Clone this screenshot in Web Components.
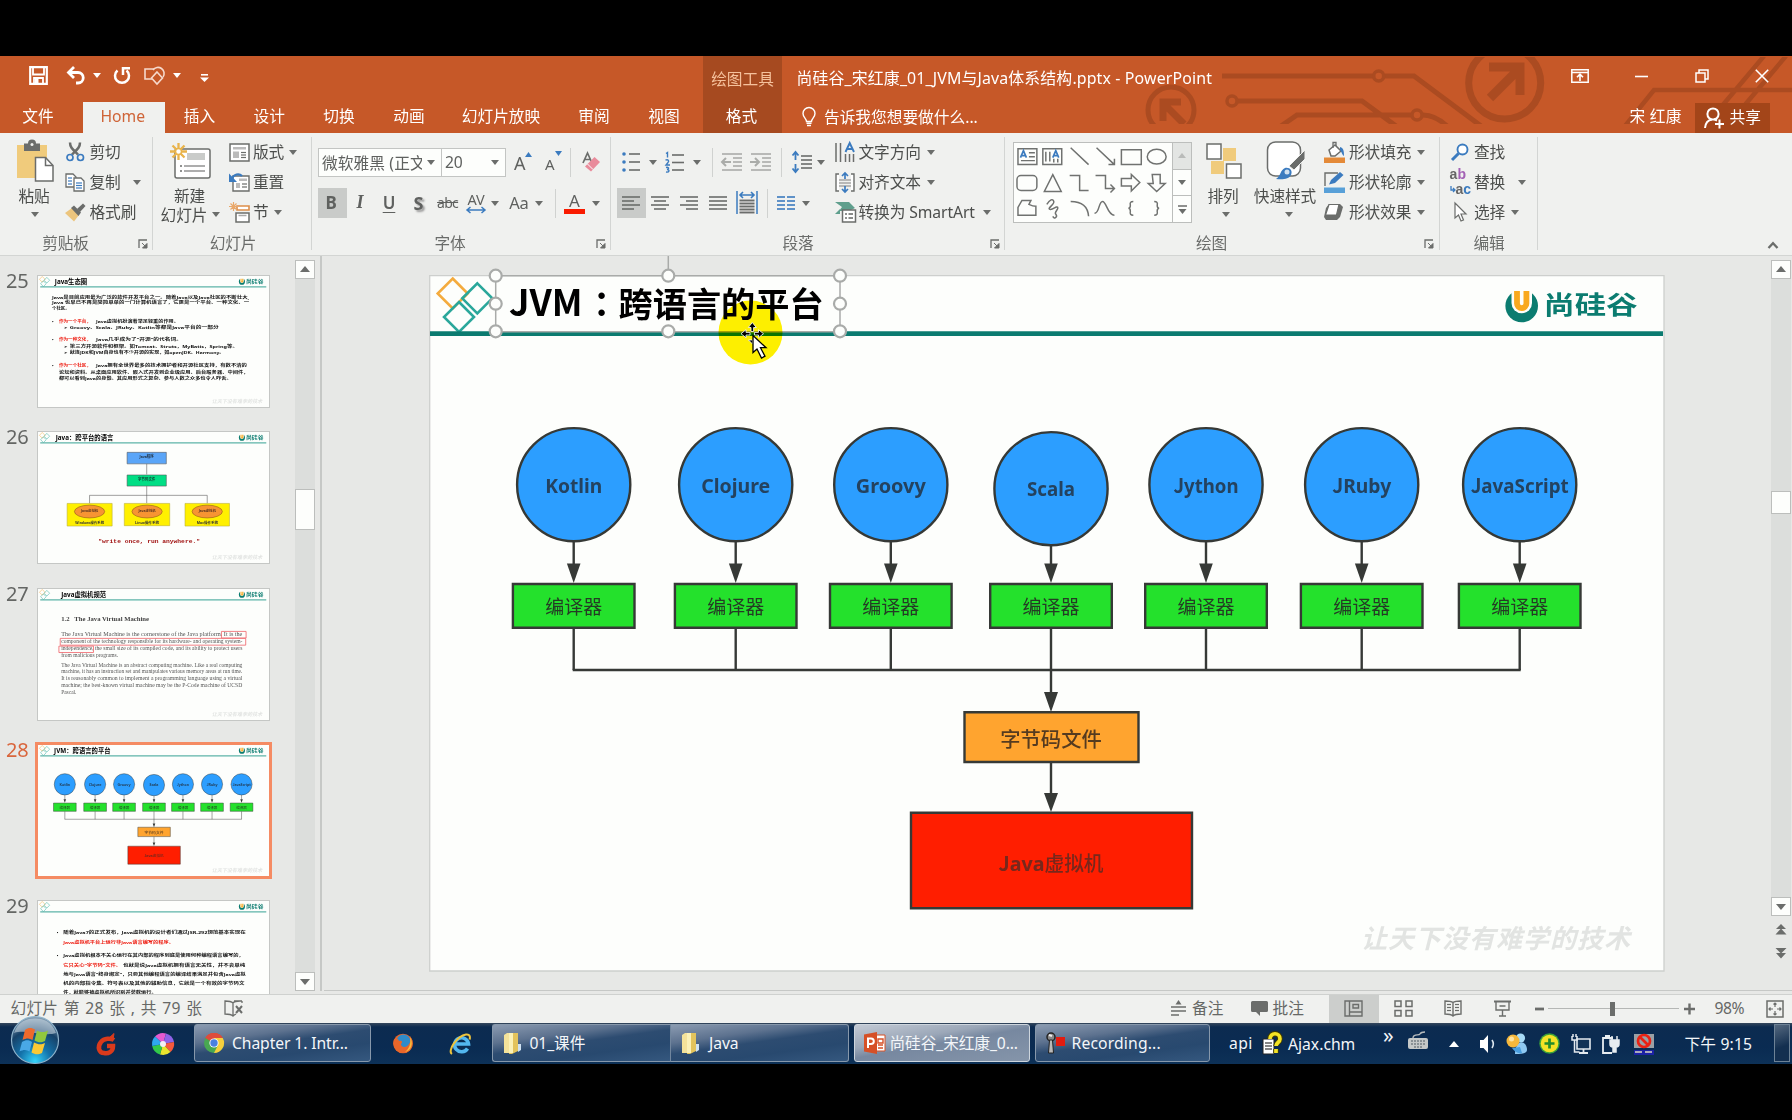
<!DOCTYPE html>
<html lang="zh-CN">
<head>
<meta charset="utf-8">
<title>PowerPoint</title>
<style>
html,body{margin:0;padding:0;background:#000;overflow:hidden}
body{width:1792px;height:1120px;font-family:"Noto Sans","Noto Sans CJK SC",sans-serif}
</style>
</head>
<body>
<ppt-app></ppt-app>
<script>
const FONT = '"Noto Sans","Noto Sans CJK SC",sans-serif';
const define = (name, render) => customElements.define(name, class extends HTMLElement {
  constructor(){ super(); this.attachShadow({mode:'open'}); }
  connectedCallback(){ this.shadowRoot.innerHTML = render(this); }
});

/* ---------- icon set: [width, height, markup] ---------- */
const G = '#6b6d6b', B = '#3b7bbf';
const lines = (x, ys, w, c=G, s=1.6) => ys.map(y=>`<path d="M${x} ${y}h${w}" stroke="${c}" stroke-width="${s}"/>`).join('');
const ICONS = {
  caret:[8,5,`<path d="M0 0h8L4 5z" fill="${G}"/>`],
  caretw:[8,5,`<path d="M0 0h8L4 5z" fill="#fff"/>`],
  launch:[10,10,`<path d="M1 9V1h8" fill="none" stroke="${G}" stroke-width="1.3"/><path d="M4 4l4 4M9 4.5V9H4.500z" fill="${G}" stroke="${G}"/>`],
  save:[19,19,`<path d="M1.200 1.200h16.600v16.600H1.200z" fill="none" stroke="#fff" stroke-width="2.200"/><path d="M4 2v6.500h11V2M5 18v-6h9v6" fill="none" stroke="#fff" stroke-width="1.800"/><path d="M6 13h3.500v5H6z" fill="#fff"/>`],
  undo:[20,19,`<path d="M2.500 6.500H12a5 5 0 0 1 0 10.500h-2" fill="none" stroke="#fff" stroke-width="2.800"/><path d="M8 1L2.500 6.500 8 12" fill="none" stroke="#fff" stroke-width="2.800"/>`],
  redo:[18,19,`<path d="M4.500 4.500A7 7 0 1 0 13.500 4.500" fill="none" stroke="#fff" stroke-width="2.500"/><path d="M10 9V2.200h7" fill="none" stroke="#fff" stroke-width="2.500"/>`],
  shapesq:[22,20,`<path d="M8 14H1V4h9" fill="none" stroke="#f6d9cc" stroke-width="1.600"/><path d="M9 5a6 6 0 1 1 10 7" fill="none" stroke="#f6d9cc" stroke-width="1.600"/><path d="M13 7l5.500 6-5.500 6-5.500-6z" fill="#c65828" stroke="#f6d9cc" stroke-width="1.600"/>`],
  more:[9,8,`<path d="M1 .8h7" stroke="#fff" stroke-width="1.600"/><path d="M0 3.500h9L4.500 8z" fill="#fff"/>`],
  dispopt:[18,14,`<path d="M.8.8h16.400v12.400H.8zM.8 3.500h16.400" fill="none" stroke="#fff" stroke-width="1.500"/><path d="M9 12V5.500M6 8.200l3-3 3 3" fill="none" stroke="#fff" stroke-width="1.600"/>`],
  min:[13,14,`<path d="M0 7.500h13" stroke="#fff" stroke-width="1.600"/>`],
  restore:[14,14,`<path d="M1 4h9v9H1zM4 4V1h9v9h-3" fill="none" stroke="#fff" stroke-width="1.500"/>`],
  close:[14,14,`<path d="M.8.8l12.400 12.400M13.200.8L.8 13.200" stroke="#fff" stroke-width="1.600"/>`],
  bulb:[14,20,`<path d="M4.500 14.500c0-3-3.500-4-3.500-8a6 6 0 0 1 12 0c0 4-3.500 5-3.500 8z" fill="none" stroke="#fff" stroke-width="1.400"/><path d="M4.500 16.300h5M5 18.500h4" stroke="#fff" stroke-width="1.400"/>`],
  person:[20,22,`<circle cx="9" cy="7" r="5.600" fill="none" stroke="#fff" stroke-width="2"/><path d="M1 21c.5-5 3-8 7-8.500M10 12l3 1.500M15.500 12.500v9M11 17h9" fill="none" stroke="#fff" stroke-width="2"/>`],
  paste:[38,41,`<rect x="1" y="4" width="30" height="33" fill="#f0cb7c"/><path d="M8 2.500h4a4 4 0 0 1 8 0h4V10H8z" fill="${G}"/><circle cx="16" cy="3.500" r="1.500" fill="#f0f1ef"/><path d="M19.500 16.500h10l7.500 8V40h-17.500z" fill="#fff" stroke="${G}" stroke-width="1.500"/><path d="M29.500 16.500v8H37" fill="none" stroke="${G}" stroke-width="1.500"/>`],
  cut:[19,20,`<path d="M4 .5c0 5 3 7 8 12M14 .5c0 5-3 7-8 12" stroke="${G}" stroke-width="2.500" fill="none"/><circle cx="4" cy="15.500" r="3" fill="none" stroke="${B}" stroke-width="1.700"/><circle cx="14.500" cy="15.500" r="3" fill="none" stroke="${B}" stroke-width="1.700"/>`],
  copy:[20,19,`<path d="M1 1h7l3 3v10H1z" fill="#fff" stroke="${G}" stroke-width="1.300"/><path d="M9 5h7l3 3v10H9z" fill="#fff" stroke="${G}" stroke-width="1.300"/>${lines(3,[5,8,11],4,B,1.200)}${lines(11,[10,12.500,15],6,B,1.200)}`],
  brush:[21,19,`<path d="M0 10l7-5 7 7-5 6.500z" fill="#ecc57d"/><path d="M6 5l3-2.500 7 7L13.500 13z" fill="${G}"/><path d="M12 6l6-5.500 2.500 2.500-5.500 6z" fill="${G}"/>`],
  newslide:[41,36,`<rect x="5" y="6" width="35" height="29" rx="2" fill="#fff" stroke="${G}" stroke-width="1.500"/><path d="M17 10h18v7H17z" fill="#c9cbc9"/>${lines(10,[23,28],2,G)}${lines(14,[23,28],21,'#999')}<g stroke="#e9b44c" stroke-width="2.300"><path d="M8.500 0v17M0 8.500h17M2.500 2.500l12 12M14.500 2.500l-12 12"/></g><circle cx="8.500" cy="8.500" r="3" fill="#fff" stroke="#e9b44c" stroke-width="1.500"/>`],
  layout:[21,19,`<path d="M1 1h19v17H1z" fill="#fff" stroke="${G}" stroke-width="1.500"/><path d="M4 4h13v2.500H4zM4 8.500h6V15H4z" fill="#bbb"/>${lines(12,[9.500,12,14.500],5,G,1.200)}`],
  reset:[21,20,`<path d="M4 4h16v15H4z" fill="#fff" stroke="${G}" stroke-width="1.400"/><path d="M7 11h4v5H7zM10 6.500h8V9h-8z" fill="#bbb"/>${lines(13,[12,15],5,G,1.200)}<path d="M2.500 7C5 2 10 1 13 4" stroke="${B}" fill="none" stroke-width="2.300"/><path d="M0 1.500V10h8z" fill="${B}"/>`],
  section:[21,21,`<path d="M8 4h12v4H8z" fill="#fff" stroke="#dd8e4a" stroke-width="1.600"/><path d="M7 11h13v9H7z" fill="#fff" stroke="${G}" stroke-width="1.500"/><path d="M9.500 13.500h8" stroke="#aaa" stroke-width="1.500"/><path d="M4.500 0v9M0 4.500h9M1.500 1.500l6 6M7.500 1.500l-6 6" stroke="#e9a86a" stroke-width="1.200"/>`],
  eraser:[18,20,`<path d="M1 11L5.500 1 10 11M3 7.500h5" fill="none" stroke="${G}" stroke-width="1.700"/><path d="M3 14.500L12.500 5 18 10l-9 9.500z" fill="#e98b9b"/><path d="M5.500 12l5.500 5.500" stroke="#fff" stroke-width="1"/>`],
  avarrow:[20,8,`<path d="M1 4h18M4.500 1L1 4l3.500 3M15.500 1L19 4l-3.500 3" fill="none" stroke="${B}" stroke-width="1.500"/>`],
  bullets:[18,20,`<g fill="${B}"><circle cx="2" cy="2" r="1.800"/><circle cx="2" cy="10" r="1.800"/><circle cx="2" cy="18" r="1.800"/></g>${lines(7,[2,10,18],11)}`],
  numbers:[19,21,`<g fill="none" stroke="${B}" stroke-width="1.400"><path d="M1 1.500l1.500-1v5M.5 8.200C3 7 4.500 9 3 10.500L1 13h4M1 15.500c3-1 3.500 1.500 1 2 3 .2 2.500 3-1 2.500"/></g>${lines(7,[3,10.500,18],12)}`],
  dedent:[22,18,`${lines(1,[1,17],20,'#aaaca9')}${lines(12,[5,9,13],9,'#aaaca9')}<path d="M10 9H1.500M5 5L1 9l4 4" fill="none" stroke="#aaaca9" stroke-width="2"/>`],
  indent:[22,18,`${lines(1,[1,17],20,'#aaaca9')}${lines(12,[5,9,13],9,'#aaaca9')}<path d="M0 9h8.500M5 5l4 4-4 4" fill="none" stroke="#aaaca9" stroke-width="2"/>`],
  spacing:[20,22,`<path d="M3.500 1v8M.5 4.500l3-3.500 3 3.500M3.500 21v-8M.5 17.500l3 3.500 3-3.500" fill="none" stroke="${B}" stroke-width="1.800"/>${lines(9,[5,9,13,17],11)}`],
  al:[18,15,lines(0,[1,9],18)+lines(0,[5,13],12)],
  ac:[18,15,lines(0,[1,9],18)+lines(3,[5,13],12)],
  ar:[18,15,lines(0,[1,9],18)+lines(6,[5,13],12)],
  aj:[18,15,lines(0,[1,5,9,13],18)],
  dist:[22,23,`<path d="M1 0v23M21 0v23" stroke="${B}" stroke-width="1.500"/><path d="M4 4h14M7 1L4 4l3 3M15 1l3 3-3 3" fill="none" stroke="${B}" stroke-width="1.600"/>${lines(3.500,[9.500,12.500,15.500,18.500,21.500],15,G,1.900)}`],
  cols:[18,15,lines(0,[1,5,9,13],8,B)+lines(10,[1,5,9,13],8,B)],
  tdir:[21,21,`<path d="M1 1v19M5.500 1v19M10.500 12v8M14.500 12v8M18.500 12v8" stroke="${G}" stroke-width="1.500"/><path d="M10.500 10L14.700 1 19 10M12 7h5.500" fill="none" stroke="${B}" stroke-width="1.900"/>`],
  talign:[20,21,`<path d="M4 2H1v17h3M16 2h3v17h-3" fill="#fff" stroke="${G}" stroke-width="1.400"/>${lines(4,[8,11,14],12,'#999',1.300)}<path d="M10 7V1M7 4l3-3 3 3M10 14v6M7 17l3 3 3-3" fill="none" stroke="${B}" stroke-width="1.700"/>`],
  smart:[22,22,`<path d="M0 1h14l6 6-6 3H4L7 6z" fill="#5f9f8d"/><path d="M0 13l5-5v5z" fill="#5f9f8d"/><path d="M7.500 9h13v12h-13z" fill="#fff" stroke="${G}" stroke-width="1.500"/>${lines(10,[13,17],2)}${lines(13.500,[13,17],4.500)}`],
  arrange:[36,36,`<path d="M17 5h13v13H17zM5 18h13v13H5z" fill="#f0cb7c"/><path d="M1 1h14v15H1zM20.500 21H35v14H20.500z" fill="#fff" stroke="${G}" stroke-width="1.500"/>`],
  quick:[40,40,`<rect x="1.500" y="1" width="33" height="34" rx="8" fill="#fff" stroke="${G}" stroke-width="1.500"/><path d="M39 9v9L28 29l-5-4z" fill="${G}" stroke="#f0f1ef"/><path d="M10 38c5-3 4-9 9-11 5-1 8 3 6 7-2 4-8 5-15 4z" fill="${B}"/><circle cx="21" cy="31" r="2.500" fill="#cfe0f0"/>`],
  fill:[22,22,`<path d="M5 9l6-5 6 6-6 5H7z" fill="#fff" stroke="${G}" stroke-width="1.500"/><path d="M9 7V1.500h3V5" fill="none" stroke="${G}" stroke-width="1.300"/><path d="M16 6c4 1 4 5 4 9-2-1-2-4-4-6z" fill="${B}"/><path d="M0 16.500h21V22H0z" fill="#e48a38"/>`],
  outline:[22,22,`<path d="M1 15V2h13" fill="none" stroke="${G}" stroke-width="1.400"/><path d="M5 13.500L7 9l9-8 3.500 3L11 12z" fill="${B}"/><path d="M0 16.500h21V22H0z" fill="#58a0d8"/>`],
  effect:[20,18,`<path d="M5 1h11l3 3-3 10-3 3H2l-2-3 2-9z" fill="${G}"/><path d="M5 1.500h10L12.500 12H1.500z" fill="#fff" stroke="${G}" stroke-width="1.200"/>`],
  find:[18,18,`<circle cx="11.500" cy="6.500" r="5" fill="#fff" stroke="${B}" stroke-width="1.900"/><path d="M7.500 10.500L1 17" stroke="${B}" stroke-width="3"/>`],
  cursor:[13,20,`<path d="M1 1v15l3.500-3 2.500 6 2.500-1-2.500-6H12z" fill="#fff" stroke="${G}" stroke-width="1.200"/>`],
  up:[12,8,`<path d="M1.500 7L6 2.200 10.500 7" fill="none" stroke="${G}" stroke-width="2.300"/>`],
  book:[19,17,`<path d="M9 3C7 1 4 1 1 1v13c3 0 6 0 8 2 1-1 2-1.500 3-2M9 3v13M9 3c1-1.500 3-2 7-2M10 1h8M18 1v2" fill="none" stroke="${G}" stroke-width="1.300"/><path d="M12 6l6 7M18 6l-6 7" stroke="${G}" stroke-width="2"/>`],
  notes:[15,16,`<path d="M4.500 4.500L7.500 0l3 4.500z" fill="${G}"/>${lines(0,[7,11],15,G,1.500)}${lines(0,[15],8,G,1.500)}`],
  comment:[17,15,`<path d="M1.500 0h14q1.500 0 1.500 1.500v8q0 1.500-1.500 1.500H9v4l-4-4H1.500Q0 11 0 9.500v-8Q0 0 1.500 0z" fill="${G}"/>`],
  normal:[19,17,`<path d="M1 1h17v15H1zM5.500 1v15M5.500 12H18M9 4.500h5.500V8H9z" fill="none" stroke="${G}" stroke-width="1.400"/>`],
  sorter:[19,17,`<path d="M1 1h6v5.500H1zM12 1h6v5.500h-6zM1 10.500h6V16H1zM12 10.500h6V16h-6z" fill="none" stroke="${G}" stroke-width="1.500"/>`],
  reading:[18,17,`<path d="M9 2.500C7 1 4 1 1 1v13c3 0 6 0 8 2 2-2 5-2 8-2V1c-3 0-6 0-8 1.500v14" fill="none" stroke="${G}" stroke-width="1.400"/>${lines(3,[4.500,7.500,10.500],4,G,1.200)}${lines(11,[4.500,7.500,10.500],4,G,1.200)}`],
  show:[17,17,`<path d="M0 1.500h17" stroke="${G}" stroke-width="2"/><path d="M2 2v8h13V2M8.500 10v6M5 16h7M5.500 6h6" fill="none" stroke="${G}" stroke-width="1.400"/>`],
  minus:[9,16,`<path d="M0 8h9" stroke="${G}" stroke-width="2.800"/>`],
  plus:[11,16,`<path d="M0 8h11M5.500 2.500v11" stroke="${G}" stroke-width="2.400"/>`],
  fit:[18,18,`<path d="M1 1h16v16H1z" fill="none" stroke="${G}" stroke-width="1.500"/><path d="M9 3v4M9 11v4M3 9h4M11 9h4M7.500 4.500L9 3l1.500 1.500M7.500 13.500L9 15l1.500-1.500M4.500 7.500L3 9l1.500 1.500M13.500 7.500L15 9l-1.500 1.500" fill="none" stroke="${G}" stroke-width="1.200"/>`],
  orb:[50,46,`<defs><radialGradient id="o" cx=".5" cy=".95" r=".95"><stop offset="0" stop-color="#35d4fb"/><stop offset=".35" stop-color="#1473ab"/><stop offset=".7" stop-color="#164168"/><stop offset="1" stop-color="#8fa6b9"/></radialGradient></defs><circle cx="25" cy="23" r="23.500" fill="url(#o)" stroke="#8fb4cc" stroke-width="1.200"/><path d="M4 16C8 4 17 1.500 25 1.500S42 4 46 16C34 20 16 12 4 16z" fill="#d3e0ea" opacity=".55"/><path d="M15 13c4-3 7-2 10-.5L22.500 23c-3-2-6-2-10 0z" fill="#ef6a2c"/><path d="M27 13.500c4 2 7 2 11 0L35 24c-4 2-7 1.500-10.500-.5z" fill="#91c83e"/><path d="M12 25c4-2.500 7-2 10 0l-2.500 9.500c-3-2-6-2-10 0z" fill="#49a8e6"/><path d="M24 25.500c4 2 7 2.500 11 .5l-3 10c-4 2-7 1.500-10.500-.5z" fill="#fcc935"/>`],
  gred:[21,22,`<path d="M18 7c-3-2-10-2-13 2-4 5-2 11 3 11 4 1 9-1 9-7h-6" fill="none" stroke="#d93a1c" stroke-width="4.500"/><path d="M13 5l5-4.500-1 6z" fill="#d93a1c" stroke="#d93a1c"/>`],
  wheel:[22,22,`<path d="M11 11L3 3.500A11 11 0 0 1 14 .5z" fill="#e65ad0"/><path d="M11 11L14 .5A11 11 0 0 1 22 9z" fill="#8f62e8"/><path d="M11 11L22 9a11 11 0 0 1-3.500 10z" fill="#f6593c"/><path d="M11 11l7.500 8A11 11 0 0 1 8 21.500z" fill="#e9e52e"/><path d="M11 11L8 21.500A11 11 0 0 1 .2 13z" fill="#32c94a"/><path d="M11 11L.2 13A11 11 0 0 1 3 3.500z" fill="#2fa8ee"/><circle cx="11" cy="11" r="3" fill="#f4eef7"/>`],
  chrome:[20,20,`<circle cx="10" cy="10" r="10" fill="#48a851"/><path d="M10 10L1.300 5A10 10 0 0 1 18.700 5z" fill="#de4b3c"/><path d="M10 5h8.700A10 10 0 0 1 10 20l4-8z" fill="#f7cf3d"/><path d="M1.300 5A10 10 0 0 1 18.700 5H10z" fill="#de4b3c"/><circle cx="10" cy="10" r="4.600" fill="#fff"/><circle cx="10" cy="10" r="3.700" fill="#4a80e0"/>`],
  firefox:[20,21,`<circle cx="10" cy="10.500" r="9.800" fill="#e8662a"/><circle cx="10.500" cy="8.500" r="7" fill="#2f8bc9"/><path d="M1 7c3-3 4-1 5 1 3-1 4 1 2 3 0 4 6 4 8 0 2-2 2-5 1-8 5 6 3 16-6 17C2 20-1 12 1 7z" fill="#e8662a"/><path d="M17 4c4 6 1 14-5 15 5-4 6-9 5-15z" fill="#f9bd3b"/>`],
  ie:[22,22,`<path d="M17.500 15.500a7 7 0 1 1 1-4.500H5" fill="none" stroke="#53b7ef" stroke-width="3.600"/><path d="M2 21c-5-3 5-18 14-19.500 5-.5 4 4 3.500 5" fill="none" stroke="#edc33c" stroke-width="2"/>`],
  folder:[18,22,`<path d="M0 3l3-2h6v20H0z" fill="#f4e29a"/><path d="M7 1h7v18l-6 3H5z" fill="#e3c35c"/><path d="M5 1h4v20H5z" fill="#fbf1b8"/><path d="M14 12h3v6l-3 2z" fill="#cfe2f3"/>`],
  ppt:[21,22,`<path d="M12 3h9v16h-9z" fill="#fff" stroke="#d65027"/><path d="M14 7h5v4h-5zM14 13h5M14 16h5" stroke="#d65027" fill="none" stroke-width="1.400"/><path d="M0 2.500L13 0v22L0 19.500z" fill="#d65027"/><path d="M4 16V6.500h3a2.800 2.800 0 0 1 0 5.600H4" fill="none" stroke="#fff" stroke-width="2"/>`],
  rec:[20,22,`<path d="M10 5h9v9h-9z" fill="#e31c10"/><circle cx="5" cy="5" r="4" fill="#888" stroke="#222" stroke-width="1.500"/><path d="M3.500 8h3l1 13h-5z" fill="#b9b9b9" stroke="#222"/><path d="M3 3l3 1" stroke="#eee" stroke-width="2"/>`],
  chm:[20,22,`<path d="M1 6h11v15H1z" fill="#fff" stroke="#222"/>${lines(3,[10,13,16],7,'#333',1.200)}<path d="M8 6c0-7 10-7 10 0 0 3.500-4 3.500-4 7M14 16v4" fill="none" stroke="#423b00" stroke-width="5.500"/><path d="M8 6c0-7 10-7 10 0 0 3.500-4 3.500-4 7M14 16v4" fill="none" stroke="#f4e325" stroke-width="3.700"/>`],
  keyb:[21,19,`<path d="M5 7c0-5 6-2 7-4s4-2 5-2" fill="none" stroke="#b7bbbd" stroke-width="1.400"/><rect y="7" width="20" height="11" rx="2" fill="#c5c8c8"/><path d="M3 10h14M3 13h14M6 16h8" stroke="#505a62" stroke-width="1.100" stroke-dasharray="2 1"/>`],
  tri:[10,6,`<path d="M0 6L5 0l5 6z" fill="#fff"/>`],
  vol:[16,20,`<path d="M0 6h3.500l4.500-5v18l-4.500-5H0z" fill="#fff"/><path d="M12 6c2 3 2 5 0 8" fill="none" stroke="#dce6ee" stroke-width="1.600"/>`],
  msn:[21,21,`<circle cx="14.500" cy="5" r="4.600" fill="#a7dbf7"/><path d="M9 21c0-16 12-14 12-4 0 4-7 4-12 4z" fill="#8fc9f2"/><path d="M6 15c5 7 10 5 10 5l-2-6z" fill="#4a9fe0"/><circle cx="7" cy="8" r="6.500" fill="#f6b83c"/><circle cx="5.500" cy="6" r="2.500" fill="#fde3a0"/>`],
  safe:[21,21,`<circle cx="10.500" cy="10.500" r="10.200" fill="#3ba23a"/><circle cx="10.500" cy="10.500" r="8.800" fill="#f4e226"/><path d="M10.500 5.500v10M5.500 10.500h10" stroke="#238c2c" stroke-width="2.700"/>`],
  net:[20,20,`<path d="M6 5h13v10H6z" fill="#123256" stroke="#e3e9ee" stroke-width="1.600"/><path d="M12.500 15v3M8 19h9" stroke="#e3e9ee" stroke-width="1.800"/><path d="M1 2v4h5V2M2 0v3M5 0v3M3.500 6v12h5" fill="none" stroke="#e3e9ee" stroke-width="1.500"/>`],
  plug:[18,20,`<path d="M11 4H1v15h9" fill="none" stroke="#e8edf1" stroke-width="1.800"/><path d="M3 1h5v3H3z" fill="#e8edf1"/><path d="M8 6h9v4q0 3-3 3v5h-3v-5q-3 0-3-3zM10 2v4M15 2v4" fill="#e8edf1" stroke="#e8edf1" stroke-width="1.500"/>`],
  block:[22,22,`<path d="M1 1h20v14H1z" fill="#9aa0a5"/><circle cx="11" cy="8" r="6" fill="#9aa0a5" stroke="#ea2113" stroke-width="2.700"/><path d="M7 4l8 8" stroke="#ea2113" stroke-width="2.700"/><path d="M1 17h20v5H1z" fill="#1c22a5"/><path d="M2 19h7M12 19h7" stroke="#aab" stroke-width="2"/>`],
};
define('ui-icon', el => { const [w,h,m] = ICONS[el.getAttribute('name')];
  return `<style>:host{display:inline-flex;flex:none;width:${w}px;height:${h}px}svg{display:block;overflow:visible}</style><svg width="${w}" height="${h}" viewBox="0 0 ${w} ${h}">${m}</svg>`; });
const ic = n => `<ui-icon name="${n}"></ui-icon>`;

/* A row of items laid out left to right; each item is [start, content] or [start, content, extra css].
   Zero-width items keep their content's own size from moving the next one. */
const track = (from, items) => { let p = from; return items.map(([x,c,s=''])=>{ const m=(x-p).toFixed(1); p=x; return `<span class="i" style="margin-left:${m}px;${s}">${c}</span>`; }).join(''); };
const TRACK = `.row{display:flex;align-items:center;height:30px;white-space:nowrap}.i{display:flex;align-items:center;width:0;flex:none;white-space:nowrap}.i>*{flex:none}`;
const mid = (w,h) => `<span style="width:${w}px;margin-left:${-w/2}px;display:flex;justify-content:center">${h}</span>`;

/* ---------- title bar ---------- */
define('title-bar', () => `<style>
:host{display:block;position:relative;height:77px;background:#c65828;color:#fff;font-size:15.700px;overflow:hidden}
${TRACK}
.art{position:absolute;left:0;top:0}
.bar{position:relative;display:flex;flex-direction:column;height:77px}
.top{height:46px}.tabs{height:31px;display:flex;align-items:stretch}
.ctx{width:79px;height:46px;background:#a64a20;color:#f5c19c;align-items:center;justify-content:center}
slot{display:contents}
.share{background:#a34519;width:75.500px;height:30px;gap:6px;padding-left:9px;box-sizing:border-box}
</style>
<svg class="art" width="1792" height="77" viewBox="0 56 1792 77" fill="none" stroke="#ab4b21" stroke-width="5">
<clipPath id="c"><path d="M0 57h1792v67H0z"/></clipPath><g clip-path="url(#c)">
<circle cx="1171" cy="110" r="23"/><path d="M1184 124l-20-20M1163 121v-19h18" stroke-width="7"/>
<path d="M1222 76h151M1385 76h29l67 50M1238 101h124l34 25M1281 126l16-11h114M1423 115q12 0 24 11"/><circle cx="1378.700" cy="76" r="5" stroke-width="3.500"/><circle cx="1232" cy="101" r="5" stroke-width="3.500"/><circle cx="1417" cy="115" r="5" stroke-width="3.500"/>
<circle cx="1504.700" cy="83" r="36" stroke-width="7"/><path d="M1490 98l27-27M1489 67h31v28" stroke-width="9"/>
<path d="M1625 126l29-36h138M1722 106l42-50M1744 106l42-50" stroke-width="4.500"/></g></svg>
<div class="bar"><div class="row top">${track(0,[
 [28.500,ic('save'),'margin-top:-8px'],[66,ic('undo'),'margin-top:-8px'],[92.500,ic('caretw'),'margin-top:-8px'],[112.500,ic('redo'),'margin-top:-8px'],[144,ic('shapesq'),'margin-top:-8px'],[172.500,ic('caretw'),'margin-top:-8px'],[199.500,ic('more'),'margin-top:-2px'],
 [703,`<span class="i ctx"><span style="margin-top:-1px">绘图工具</span></span>`],[796.500,'<span style="font-size:15.900px;letter-spacing:.14px">尚硅谷_宋红康_01_JVM与Java体系结构.pptx - PowerPoint</span>','margin-top:-4px'],
 [1571,ic('dispopt'),'margin-top:-7px'],[1634.500,ic('min'),'margin-top:-7px'],[1694.500,ic('restore'),'margin-top:-7px'],[1754.500,ic('close'),'margin-top:-7px']])}</div>
<div class="tabs"><slot></slot><div class="row" style="height:31px">${track(782,[[802,ic('bulb'),'margin-top:-1px'],[824,'告诉我您想要做什么...','margin-top:-2px'],[1629.500,'<span style="letter-spacing:.3px">宋 红康</span>','margin-top:-4px'],[1694.500,`<span class="i share">${ic('person')}<span style="margin-top:-2px">共享</span></span>`]])}</div></div></div>`);
define('ribbon-tab', el => `<style>:host{display:flex;flex:none;align-items:center;justify-content:center;padding-bottom:4px;box-sizing:border-box;width:${el.getAttribute('w')}px}
:host([active]){background:#f0f1ef;color:#cf6437;padding-right:2px}:host([ctx]){background:#a64a20;margin-left:5px;padding-right:2px}</style><slot></slot>`);

/* ---------- ribbon ---------- */
define('ribbon-group', el => { const w=+el.getAttribute('w'), l=el.getAttribute('lx'), a=el.getAttribute('launch');
 return `<style>:host{display:flex;flex-direction:column;flex:none;width:${w}px;height:118px}
.body{display:flex;height:91px;margin-right:-1px;position:relative;z-index:1}.foot{display:flex;height:28px;align-items:center;color:#6a6c6a}
.f{width:0;display:flex;white-space:nowrap;height:28px;align-items:center}
.wrap{border-right:1px solid #d3d5d3;height:113px}</style>
<div class="wrap"><div class="body"><slot></slot></div><div class="foot"><span class="f" style="margin-left:${l}px;justify-content:center"><b style="font-weight:400">${el.getAttribute('label')}</b></span>${a?`<span class="f" style="margin-left:${a-l}px;padding-top:3px">${ic('launch')}</span>`:''}</div></div>`; });
define('big-button', el => `<style>:host{display:flex;flex-direction:column;flex:none;width:${el.getAttribute('w')}px;align-items:center;height:90px}
.p{height:48px;display:flex;align-items:center;box-sizing:border-box}.l{height:20px;display:flex;align-items:center;white-space:nowrap;margin-left:-2px}.c{height:18px;display:flex;align-items:center;white-space:nowrap;gap:5px;padding-left:${el.getAttribute('shift')||0}px}</style>
<div class="p">${ic(el.getAttribute('icon'))}</div><div class="l">${el.getAttribute('label')}</div><div class="c">${el.hasAttribute('second')?`<span>${el.getAttribute('second')}</span>`:''}${ic('caret')}</div>`);
const ABAC = '<span style="display:flex;flex-direction:column;font:bold 14px/14px Liberation Sans,sans-serif;color:#666;height:28px;margin-top:-2px"><span style="height:14px;letter-spacing:.3px">a<span style="color:#a462b5">b</span></span><span style="display:flex;align-items:center;height:14px;margin-top:1px"><svg width="6" height="7" viewBox="0 0 6 7"><path d="M1 0v4h4M3 2l2 2-2 2" fill="none" stroke="#3b7bbf" stroke-width="1.300"/></svg>a<span style="color:#3b7bbf">c</span></span></span>';
define('item-rows', el => { const x=JSON.parse(el.getAttribute('rows'));
 return `<style>:host{display:flex;flex-direction:column;width:${el.getAttribute('w')||0}px;flex:none}${TRACK}</style>`+x.map(([i,ix,t,tx,c])=>`<div class="row">${track(0,[[ix,i==='abac'?ABAC:ic(i)],[tx,t,'margin-top:-.5px']].concat(c?[[c,ic('caret')]]:[]))}</div>`).join(''); });
define('font-rows', () => { const s=(t,css)=>`<span style="${css}">${t}</span>`, sep='<span style="width:1px;height:29px;background:#d0d2d0"></span>';
 return `<style>:host{display:flex;flex-direction:column;height:90px;color:#5f615f;font-size:17px}${TRACK}
 .box{height:29px;box-sizing:border-box;border:1px solid #c3c5c3;background:#fdfefc;display:flex;align-items:center;justify-content:space-between;font-size:15.700px;padding:0 6px 0 3px;overflow:hidden}</style>
 <div class="row" style="height:30px;margin-top:10px">${track(312,[[318,'<span class="box" style="width:124px"><span style="width:100px;overflow:hidden;letter-spacing:.1px">微软雅黑 (正文</span><ui-icon name="caret"></ui-icon></span>'],[441,'<span class="box" style="width:65px"><span>20</span><ui-icon name="caret"></ui-icon></span>'],
 [514,s('A','font-size:18px;padding-top:2px')+'<svg width="7" height="5" style="margin:-16px 0 0 0"><path d="M0 5h7L3.500 0z" fill="#3b7bbf"/></svg>'],[545,s('A','font-size:15px;padding-top:4px')+'<svg width="7" height="5" style="margin:-18px 0 0 0"><path d="M0 0h7L3.500 5z" fill="#3b7bbf"/></svg>'],[570,sep],[582,ic('eraser')]])}</div>
 <div class="row" style="height:30px;margin-top:11px">${track(312,[[317.500,'<span style="width:29px;height:30px;background:#c9cbc9;display:flex;align-items:center;justify-content:center;font-weight:bold"><span style="margin:-2px 2px 0 0">B</span></span>'],[360,mid(20,s('I','font:italic 18px Liberation Serif,serif;font-weight:bold')),'margin-top:-2px'],[389,mid(20,s('U','font-weight:600;text-decoration:underline;text-underline-offset:3px')),'margin-top:-2px'],[418.500,mid(20,s('S','font-weight:bold;font-size:18px;text-shadow:2px 2px 2px #999')),'margin-top:-1px'],[447.600,mid(30,s('abc','font-size:14px;text-decoration:line-through;letter-spacing:-.7px')),'margin-top:-1px'],
 [476,mid(24,`<span style="display:flex;flex-direction:column;align-items:center;font-size:14.500px;line-height:14px">AV${ic('avarrow')}</span>`),'margin-top:-1px'],[491,ic('caret')],[519,mid(24,s('Aa','font-size:16.500px')),'margin-top:-1px'],[535,ic('caret')],[555,sep],[574.500,mid(24,'<span style="display:flex;flex-direction:column;align-items:center;font-size:17px;line-height:16px">A<span style="width:21px;height:5px;background:#f91b00"></span></span>')],[592,ic('caret')]])}</div>`; });
define('para-rows', () => { const sep='<span style="width:1px;height:29px;background:#d0d2d0"></span>';
 return `<style>:host{display:flex;flex-direction:column;height:90px;width:224px;flex:none}${TRACK}</style>
 <div class="row" style="margin-top:10px">${track(611,[[621.500,ic('bullets')],[648.600,ic('caret')],[665.500,ic('numbers')],[693,ic('caret')],[712,sep],[721,ic('dedent')],[750,ic('indent')],[781,sep],[792,ic('spacing')],[816.600,ic('caret')]])}</div>
 <div class="row" style="margin-top:11px">${track(611,[[616.500,`<span style="width:29px;height:30px;background:#c9cbc9;display:flex;align-items:center;justify-content:center">${ic('al')}</span>`],[651,ic('ac')],[680,ic('ar')],[709,ic('aj')],[735.600,ic('dist'),'margin-top:-2px'],[767,sep],[777.500,ic('cols')],[802,ic('caret')]])}</div>`; });
define('shape-gallery', () => { const k='#707270';
 return `<style>:host{display:flex;flex:none;width:179px;height:81px;margin:5px 0 0 8px;box-sizing:border-box;border:1px solid #bcbebc;background:#fdfefc}svg{display:block}
 .s{display:flex;flex-direction:column;width:18px;border-left:1px solid #bcbebc}.s span{flex:1;display:flex;align-items:center;justify-content:center;border-bottom:1px solid #bcbebc}.s span:last-child{border:0}</style>
 <svg width="159" height="79" viewBox="1014 142.500 159 79" fill="none" stroke="${k}" stroke-width="1.500">
 <path d="M1018 148h19v16h-19zM1029 152h6M1029 156h6M1021 160h14M1043 148h19v16h-19zM1046 151v10M1050 151v10M1054 158v4M1058 158v4"/><g stroke="${B}" stroke-width="1.700"><path d="M1020.500 157l3-7 3 7M1021.500 155h4M1053 157l3-7 3 7M1054 155h4"/></g>
 <path d="M1071 147l18 17M1097 147l18 17M1115 158v6h-6M1122 149h20v15h-20z"/><ellipse cx="1157.500" cy="156" rx="9.500" ry="7.500"/>
 <rect x="1017" y="175" width="20" height="15" rx="4"/><path d="M1053 174l8.500 17h-17zM1070 175h10v15h9M1096 175h10v13h9M1111 184l4 4-4 4M1122 178h10v-4l8.500 8-8.500 8.500v-5h-10zM1153 174h8v9h5l-8.500 8-8.500-8h5z"/>
 <path d="M1018 215v-8l4-7h9l-2 4q4 2 7 2v9zM1047 204c3-5 6-6 7-3s-7 7-4 8 7-4 8-2-4 5-2 7-1 6-3 2M1071 201q17 0 18 15M1095 213c5 0 4-12 8-12s5 14 12 14M1134 201q-4 0-3 4 0 3-2 3 2 0 2 3-1 4 3 4M1155 201q4 0 3 4 0 3 2 3-2 0-2 3 1 4-3 4"/></svg>
 <div class="s"><span style="background:#e3e5e3"><svg width="8" height="5"><path d="M0 5h8L4 0z" fill="#b9bbb9"/></svg></span><span>${ic('caret')}</span><span><svg width="9" height="9"><path d="M0 1h9" stroke="${G}" stroke-width="1.500"/><path d="M.5 4h8l-4 5z" fill="${G}"/></svg></span></div>`; });
const rows = r => JSON.stringify(r).replace(/"/g,'&quot;');
define('ribbon-bar', () => `<style>:host{display:flex;height:123px;box-sizing:border-box;padding-top:4px;background:#f0f1ef;border-bottom:1px solid #d3d5d3;color:#4c4e4c;font-size:15.700px;letter-spacing:-.1px}
.end{flex:1;display:flex;justify-content:flex-end;align-items:flex-end;padding:0 13px 6px 0}</style>
<ribbon-group w="153" label="剪贴板" lx="65.500" launch="138"><big-button w="64" style="padding-left:6px;box-sizing:border-box" icon="paste" label="粘贴"></big-button><item-rows rows="${rows([['cut',1.600,'剪切',25.500],['copy',1,'复制',25.500,69],['brush',1,'格式刷',25.500]])}"></item-rows></ribbon-group>
<ribbon-group w="159" label="幻灯片" lx="80" launch=""><big-button w="75" icon="newslide" label="新建" second="幻灯片" ></big-button><item-rows rows="${rows([['layout',.5,'版式',25,61],['reset',.5,'重置',25],['section',.5,'节',25,45.500]])}"></item-rows></ribbon-group>
<ribbon-group w="299" label="字体" lx="138" launch="283.500"><font-rows></font-rows></ribbon-group>
<ribbon-group w="394" label="段落" lx="187" launch="379"><para-rows></para-rows><item-rows rows="${rows([['tdir',0,'文字方向',23.500,91.600],['talign',0,'对齐文本',23.500,91.600],['smart',0,'转换为 SmartArt',23.500,148]])}"></item-rows></ribbon-group>
<ribbon-group w="435" label="绘图" lx="206.600" launch="419"><shape-gallery></shape-gallery><big-button w="62" style="margin-left:1px" icon="arrange" label="排列" shift="4"></big-button><big-button w="68" style="margin-left:-3px" icon="quick" label="快速样式" shift="5"></big-button><item-rows rows="${rows([['fill',4,'形状填充',29,97],['outline',4,'形状轮廓',29,97],['effect',4,'形状效果',29,97]])}"></item-rows></ribbon-group>
<ribbon-group w="98" label="编辑" lx="49" launch=""><item-rows rows="${rows([['find',11,'查找',34],['abac',9.500,'替换',34,78],['cursor',14,'选择',34,71]])}"></item-rows></ribbon-group>
<div class="end">${ic('up')}</div>`);

/* ---------- slides, drawn in one shared coordinate space ---------- */
const LOGO = `<circle cx="1521.700" cy="306" r="16.300" fill="#0b7c70"/><path d="M1511.500 287h20.500v16a10.200 10.200 0 0 1-20.500 0z" fill="#fdfefc"/><path d="M1517 291v12.500a4.700 4.700 0 0 0 9.400 0V291" fill="none" stroke="#f9a91f" stroke-width="5.800"/><text x="1543.500" y="314.300" font-size="25.500" font-weight="700" fill="#0b7c70" textLength="94" lengthAdjust="spacingAndGlyphs">尚硅谷</text>`;
const header = (title, x, thumb, mark=true) => `<g fill="none" stroke-width="2.600"><path d="M452.700 278.500l15 15-15 15-15-15z" stroke="#f4ab3e"/><path d="M477.300 283.300l15 15-15 15-15-15z" stroke="#2aa79b"/><path d="M459 302l15 15-15 15-15-15z" stroke="#2aa79b"/></g>
<path d="M${thumb?442:430} 333.600H${thumb?1652:1663}" stroke="${thumb?'#5cb3a8':'#0b7b70'}" stroke-width="${thumb?6:4.600}"/>${LOGO}
<text x="${x}" y="316" font-size="34" font-weight="700" fill="#000">${title}</text>
${mark?'<text x="1361" y="948" font-size="26" font-style="italic" font-weight="700" fill="#e2e4e2" textLength="269">让天下没有难学的技术</text>':''}`;
const K='#363936', XS=[573.700,735.700,890.800,1051,1206,1361.700,1519.700], NM=['Kotlin','Clojure','Groovy','Scala','Jython','JRuby','JavaScript'], NW=[57,69,70,48,65,59,98];
const nm = s => s[0]==='J' ? `<tspan font-family="Noto Sans CJK SC">J</tspan>${s.slice(1)}` : s;
const diagram = () => `<g stroke="${K}" stroke-width="2.400">${XS.map((x,i)=>{const y=i==3?488.700:484.700;return `<circle cx="${x}" cy="${y}" r="56.600" fill="#2c9eff"/><path d="M${x} ${y+57}V565M${x} 628V670"/><path d="M${x-6.800} 563.500h13.600L${x} 583z" fill="${K}" stroke="none"/><path d="M${x-60.800} 584h121.600v43.800h-121.600z" fill="#24e12c"/>`}).join('')}
<path d="M572.700 670H1520.700M1051 670V694M1051 762V794" fill="none"/><path d="M1044 692h14l-7 20zM1044 793h14l-7 19z" fill="${K}" stroke="none"/><path d="M964.500 712.300h174v49.700h-174z" fill="#ffa42f"/><path d="M911 812.800h281v95.500H911z" fill="#ff1e00"/></g>
<g text-anchor="middle" font-weight="700" fill="#24425f">${XS.map((x,i)=>`<text x="${x}" y="${i==3?496:492.500}" font-size="19.500" textLength="${NW[i]}" lengthAdjust="spacingAndGlyphs">${nm(NM[i])}</text><text x="${x}" y="613.500" font-size="19" font-weight="400" fill="#253b25">编译器</text>`).join('')}
<text x="1051" y="747" font-size="20.300" font-weight="500" fill="#553b20">字节码文件</text><text x="1051" y="871" font-size="20" font-weight="500" fill="#77281c" textLength="105" lengthAdjust="spacingAndGlyphs"><tspan font-weight="700" font-family="Noto Sans CJK SC">J</tspan><tspan font-weight="700">ava</tspan>虚拟机</text></g>`;
const L = (x,y,w,t,c='#111',s=22,e='') => `<text x="${x}" y="${y+8}" font-size="${s}" fill="${c}" font-weight="700" ${w?`textLength="${w}" lengthAdjust="spacingAndGlyphs"`:''} ${e}>${t}</text>`;
const R='#ee1c10', COLON='<tspan font-family="Noto Sans CJK TC">：</tspan>';
const SLIDES = {
 25:()=>header('Java生态圈',520,1)+L(505,391,1055,'Java是目前应用最为广泛的软件开发平台之一。随着Java以及Java社区的不断壮大,')+L(505,418,1055,'Java 也早已不再是简简单单的一门计算机语言了，它更是一个平台、一种文化、一')+L(505,451,95,'个社区。')
  +L(505,515,0,'•')+L(542,515,172,'作为一个平台，',R)+L(741,515,443,'Java虚拟机扮演着举足轻重的作用。')+L(568,550,0,'➢')+L(600,550,797,'Groovy、Scala、JRuby、Kotlin等都是Java平台的一部分')
  +L(505,612,0,'•')+L(542,612,172,'作为一种文化，',R)+L(741,612,460,'Java几乎成为了“开源”的代名词。')+L(568,648,0,'➢')+L(600,648,900,'第三方开源软件和框架。如Tomcat、Struts，MyBatis，Spring等。')+L(568,684,0,'➢')+L(600,684,828,'就连JDK和JVM自身也有不少开源的实现，如openJDK、Harmony。')
  +L(505,752,0,'•')+L(542,752,172,'作为一个社区，',R)+L(741,752,808,'Java拥有全世界最多的技术拥护者和开源社区支持，有数不清的')+L(542,788,1015,'论坛和资料。从桌面应用软件、嵌入式开发到企业级应用、后台服务器、中间件，')+L(542,818,925,'都可以看到Java的身影。其应用形式之复杂、参与人数之众多也令人咋舌。'),
 26:()=>header('Java'+COLON+'跨平台的语言',525,1)+`<g stroke="#555" stroke-width="3"><path d="M907 384h210v61H907z" fill="#5aa5f8"/><path d="M907 504h210v59H907z" fill="#00de84"/><path d="M1012 445v56M1012 563v90M706 655v-43h630v43" fill="none"/><path d="M586 655h241v120H586zM892 655h243v118H892zM1217 655h238v120h-238z" fill="#fff000" stroke="#b8ad38"/><g fill="#f79433" stroke="#8b5515"><ellipse cx="706" cy="698" rx="81" ry="34"/><ellipse cx="1014" cy="698" rx="81" ry="34"/><ellipse cx="1336" cy="698" rx="81" ry="34"/></g></g>${L(974,407,76,'Java程序','#234')}${L(966,526,92,'字节码文件','#143')}${L(660,690,92,'Java虚拟机','#532',18)}${L(968,690,92,'Java虚拟机','#532',18)}${L(1290,690,92,'Java虚拟机','#532',18)}${L(630,754,154,'Windows操作系统','#333',18)}${L(950,754,128,'Linux操作系统','#333',18)}${L(1280,754,114,'Mac操作系统','#333',18)}`+L(753,858,544,'"write once, run anywhere."','#a01010',30,'font-family="Liberation Mono"'),
 27:()=>header('Java虚拟机规范',554,1)+'<g font-family="Liberation Serif">'+L(554,436,470,'1.2&#160;&#160; The Java Virtual Machine','#444',34)+[[518,970,'The Java Virtual Machine is the cornerstone of the Java platform. It is the'],[557,970,'component of the technology responsible for its hardware- and operating system-'],[592,970,'independence, the small size of its compiled code, and its ability to protect users'],[628,305,'from malicious programs.'],[682,970,'The Java Virtual Machine is an abstract computing machine. Like a real computing'],[716,970,'machine, it has an instruction set and manipulates various memory areas at run time.'],[749,970,'It is reasonably common to implement a programming language using a virtual'],[787,970,'machine; the best-known virtual machine may be the P-Code machine of UCSD'],[823,82,'Pascal.']].map(a=>L(554,a[0],a[1],a[2],'#555',28,'style="font-weight:400"')).join('')+'</g><path d="M1412 501h132v35h-132zM549 538h993v36H549zM542 579h185v34H542z" fill="none" stroke="#f06a70" stroke-width="4.500"/>',
 28:()=>header('JVM'+COLON+'跨语言的平台',516,1)+diagram(),
 29:()=>header('',509,1,false)+L(530,441,0,'•')+L(565,441,977,'随着Java7的正式发布，Java虚拟机的设计者们通过JSR-292规范基本实现在')+L(565,496,593,'Java虚拟机平台上运行非Java语言编写的程序。',R)+L(530,566,0,'•')+L(565,566,967,'Java虚拟机根本不关心运行在其内部的程序到底是使用何种编程语言编写的，')+L(565,616,310,'它只关心“字节码”文件。',R)+L(885,616,655,'也就是说Java虚拟机拥有语言无关性，并不会单纯')+L(565,664,977,'地与Java语言“终身绑定”，只要其他编程语言的编译结果满足并包含Java虚拟')+L(565,714,970,'机的内部指令集、符号表以及其他的辅助信息，它就是一个有效的字节码文')+L(565,762,500,'件，就能够被虚拟机所识别并装载运行。'),
};
define('slide-thumb', el => { const n=el.getAttribute('n'), s=el.hasAttribute('selected');
 return `<style>:host{display:flex;flex:none;height:131px;margin-bottom:25.200px}
 .n{width:38px;box-sizing:border-box;padding-left:6px;font-size:20px;line-height:24px;margin-top:-7px;color:${s?'#d9663d':'#646664'};letter-spacing:-.3px;flex:none}
 svg{display:block;width:230.500px;height:131px;background:#fdfefc;outline:${s?'3.500px solid #f58b63':'1px solid #c5c7c5'};font-family:"Noto Sans","Noto Sans CJK SC",sans-serif}</style>
 <span class="n">${n}</span><svg viewBox="430 276 1234 695" preserveAspectRatio="none">${SLIDES[n]()}</svg>`; });
define('scroll-bar', el => { const t=el.getAttribute('thumb'), h=el.getAttribute('size');
 const b=(d)=>`<span class="b"><svg width="10" height="6"><path d="${d?'M0 0h10L5 6z':'M0 6h10L5 0z'}" fill="${G}"/></svg></span>`;
 return `<style>:host{display:flex;flex-direction:column;flex:none;width:20px;background:#dcdedc;height:${el.getAttribute('h')}px;margin-top:3.500px}
 .b{height:19px;box-sizing:border-box;border:1px solid #bcbebc;background:#fdfefc;display:flex;align-items:center;justify-content:center}.t{margin-top:${t}px;height:${h}px;box-sizing:border-box;border:1.500px solid #bcbebc;background:#fdfefc}.g{flex:1}</style>${b(0)}<span class="t"></span><span class="g"></span>${b(1)}`; });

define('slide-canvas', () => `<style>:host{display:block;width:1235px;flex:none;height:735px;font-family:${FONT}}
svg{display:block;overflow:visible}.c{mix-blend-mode:multiply}</style>
<svg width="1235" height="735" viewBox="429 256 1235 735"><path d="M429.700 275.700H1664V971H429.700z" fill="#fdfefc" stroke="#cdcfcd" stroke-width="1.300"/>
${header('',509)}
<text y="317.200" font-size="34.200" font-weight="700"><tspan x="509" y="316.200" font-size="36" textLength="73.500" lengthAdjust="spacingAndGlyphs" font-family="Noto Sans CJK SC">JVM</tspan><tspan x="584.500" y="317.200" font-family="Noto Sans CJK TC" lang="zh-TW">：</tspan><tspan x="618.500">跨语言的平台</tspan></text>
${diagram()}
<g fill="none" stroke="#a9aba9" stroke-width="1.500"><path d="M668.300 256V276M495.700 275.700H840V331.700H495.700z"/><g fill="#fdfefc" stroke-width="2.200">${[[495.700,275.700],[668.300,275.700],[840,275.700],[495.700,303.700],[840,303.700],[495.700,331.300],[668.300,331.300],[840,331.300]].map(p=>`<circle cx="${p[0]}" cy="${p[1]}" r="6"/>`).join('')}</g></g>
<circle class="c" cx="750.500" cy="332.500" r="32" fill="#fff000"/>
<g stroke="#fff" stroke-width=".8" fill="#000"><path d="M752.300 322.500l4 5h-2.700v4h-2.600v-4h-2.700zM741 333.700l5-4v2.700h4v2.600h-4v2.700zM763.500 333.700l-5-4v2.700h-4v2.600h4v2.700zM748.500 340h4v4z"/></g>
<path d="M753 335.500v17l4-3.500 4.500 9 3.500-1.800-4.500-8.500h5.500z" fill="#fff" stroke="#000" stroke-width="1.300"/></svg>`);

define('work-area', () => `<style>:host{display:flex;height:738px;background:#e7e8e6;overflow:hidden}
.list{width:295px;height:738px;overflow:hidden;padding-top:20.300px;box-sizing:border-box;display:flex;flex-direction:column}
.div{width:1.500px;background:#c6c8c6;margin-left:5px;height:735px}.main{flex:1;margin-left:2px;display:flex;justify-content:space-between;height:735px;border-bottom:1px solid #c6c8c6;box-sizing:border-box}
.r{display:flex;flex-direction:column;width:21px;align-items:flex-start;gap:0}.r svg{display:block;margin:8px 0 0 4px}.mid{display:flex;padding-left:105.500px}</style>
<div class="list">${[25,26,27,28,29].map(n=>`<slide-thumb n="${n}" ${n==28?'selected':''}></slide-thumb>`).join('')}</div>
<scroll-bar thumb="210.500" size="41" h="731.500"></scroll-bar><div class="div"></div>
<div class="main"><div class="mid"><slide-canvas></slide-canvas></div><div class="r"><scroll-bar thumb="212" size="23" h="656.500"></scroll-bar>
<svg width="12" height="40" viewBox="0 0 12 40" fill="${G}"><path d="M6 0l5 5H1zM6 4.500l5.500 6H.5zM.5 24h11L6 29.500zM1 29h10L6 34.500z"/></svg></div></div>`);

/* ---------- status bar ---------- */
define('status-bar', () => `<style>:host{display:flex;height:29px;box-sizing:border-box;background:#f0f1ef;border-top:1px solid #cfd1cf;color:#666866;font-size:15.700px}${TRACK}.row{height:27px}
.sel{width:49.500px;height:28px;background:#cccecc;justify-content:center}</style><div class="row">${track(0,[[10.500,'<span style="letter-spacing:.25px;word-spacing:1.200px">幻灯片 第 28 张 , 共 79 张</span>','margin-top:-2px'],[224,ic('book'),'margin-top:-1px'],[1171,ic('notes'),'margin-top:-1px'],[1192,'备注','margin-top:-2px'],[1251,ic('comment'),'margin-top:-1px'],[1272.500,'批注','margin-top:-2px'],
[1329,`<span class="i sel">${ic('normal')}</span>`],[1394,ic('sorter'),'margin-top:-1px'],[1444,ic('reading'),'margin-top:-1px'],[1494,ic('show'),'margin-top:-1px'],[1535,ic('minus')],[1548,'<span style="width:131px;height:1.500px;background:#b5b7b5"></span>'],[1609.500,'<span style="width:5.500px;height:14px;background:#6b6d6b"></span>'],[1684,ic('plus')],[1714.500,'<span style="letter-spacing:-.5px">98%</span>','margin-top:-2px'],[1765.500,ic('fit')]])}</div>`);

/* ---------- Windows taskbar ---------- */
define('task-button', el => `<style>:host{display:flex;flex:none;align-items:center;box-sizing:border-box;height:38px;width:${el.getAttribute('w')}px;padding-left:${el.getAttribute('pad')||11}px;gap:8px;border:1.500px solid #8798ab;border-radius:3px;white-space:nowrap;letter-spacing:-.1px;
background:linear-gradient(172deg,#8b9bb1 0,#5d728f 30%,#2d4c71 48%,#28496f 70%,#35587f 100%)}
:host([active]){background:linear-gradient(170deg,#c3cad5 0,#9ba7b8 35%,#7788a0 50%,#8595aa 100%);border-color:#cdd5dd}
:host([flatright]){border-right:none;border-radius:3px 0 0 3px}:host([flatleft]){border-left-color:#71869e;border-radius:0 3px 3px 0}</style>${ic(el.getAttribute('icon'))}<slot></slot>`);
define('task-bar', () => `<style>:host{display:block;height:41px;background:linear-gradient(#35475c 0,#0c2b50 4px,#0a2b52 60%,#0d3157);color:#f3f6f9;font-size:15.700px}${TRACK}.row{height:41px}</style>
 <div class="row">${track(0,[[10,ic('orb'),'margin-top:-8px'],[96,ic('gred')],[151.500,ic('wheel')],
 [194,'<task-button w="177" icon="chrome" pad="9"><span>Chapter 1. Intr...</span></task-button>','margin-top:-2px'],[392.500,ic('firefox')],[449.500,ic('ie')],
 [491.500,'<task-button w="179" icon="folder" flatright>01_课件</task-button>','margin-top:-2px'],[670,'<task-button w="178.500" icon="folder" flatleft><span style="padding-left:1px">Java</span></task-button>','margin-top:-2px'],
 [853.500,'<task-button w="176.500" icon="ppt" pad="9" active style="gap:5px">尚硅谷_宋红康_0...</task-button>','margin-top:-2px'],[1034.500,'<task-button w="175.500" icon="rec" pad="10" style="gap:6px"><span style="letter-spacing:.15px">Recording...</span></task-button>','margin-top:-2px'],
 [1229,'<span style="letter-spacing:.4px">api</span>','margin-top:-1px'],[1262,ic('chm')],[1288,'Ajax.chm'],[1383,'<span style="font-size:21px;margin-top:-18px">»</span>'],[1408,ic('keyb'),'margin-top:-6px'],[1449,ic('tri')],[1479.500,ic('vol')],[1506,ic('msn')],[1538.500,ic('safe')],[1571,ic('net')],[1602,ic('plug')],[1633,ic('block')],[1684.500,'<span style="letter-spacing:.15px">下午 9:15</span>'],
 [1773.700,'<span style="width:16px;height:38px;box-sizing:border-box;border:1px solid #6d8296;background:linear-gradient(160deg,#54687f,#132f50 60%)"></span>','margin-top:-1px']])}</div>`);

define('ppt-app', () => `<style>:host{display:flex;flex-direction:column;width:1792px;height:1120px;padding:56px 0;box-sizing:border-box;background:#000;font-family:${FONT}}
:host>*{flex:none}task-bar{position:relative}</style>
<title-bar><ribbon-tab w="83" style="padding-right:7px">文件</ribbon-tab><ribbon-tab w="81.500" active>Home</ribbon-tab><ribbon-tab w="70">插入</ribbon-tab><ribbon-tab w="69.500">设计</ribbon-tab><ribbon-tab w="70">切换</ribbon-tab><ribbon-tab w="70">动画</ribbon-tab><ribbon-tab w="114">幻灯片放映</ribbon-tab><ribbon-tab w="72">审阅</ribbon-tab><ribbon-tab w="68">视图</ribbon-tab><ribbon-tab w="79" ctx>格式</ribbon-tab></title-bar>
<ribbon-bar></ribbon-bar><work-area></work-area><status-bar></status-bar><task-bar></task-bar>`);
</script>
</body>
</html>
